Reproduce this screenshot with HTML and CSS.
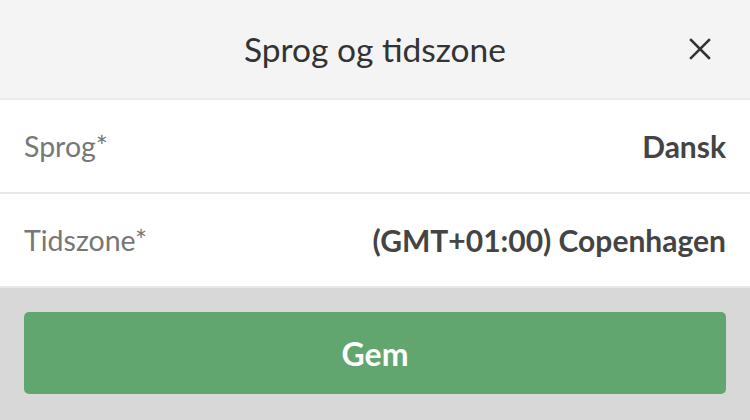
FILE: index.html
```html
<!DOCTYPE html>
<html lang="da">
<head>
<meta charset="utf-8">
<link rel="stylesheet" href="styles.css">
</head>
<body>
<div class="modal">
  <header class="head">
    <h1 class="title">Sprog og tidszone</h1>
    <button class="close" aria-label="Luk">
      <svg width="22" height="22" viewBox="0 0 22 22"><path d="M2 2 L20 20 M20 2 L2 20" stroke="#333" stroke-width="2.5" stroke-linecap="square" fill="none"/></svg>
    </button>
  </header>
  <div class="row">
    <span class="label">Sprog*</span>
    <span class="value">Dansk</span>
  </div>
  <div class="row">
    <span class="label">Tidszone*</span>
    <span class="value">(GMT+01:00) Copenhagen</span>
  </div>
  <footer class="foot">
    <button class="save">Gem</button>
  </footer>
</div>
</body>
</html>
```
FILE: styles.css
```css
html, body {
  margin: 0;
  padding: 0;
  height: 100%;
}
body {
  font-family: Lato, "Open Sans", sans-serif;
  background: #d8d8d8;
}
.modal {
  display: flex;
  flex-direction: column;
  height: 420px;
}
.head {
  height: 98px;
  background: #f4f4f4;
  border-bottom: 2px solid #ebebef;
  display: flex;
  align-items: center;
  justify-content: center;
  position: relative;
}
.title {
  margin: 0;
  font-weight: 400;
  font-size: 33.5px;
  color: #333;
}
.close {
  position: absolute;
  right: 39px;
  top: 38px;
  width: 22px;
  height: 22px;
  padding: 0;
  border: 0;
  background: none;
  display: flex;
}
.row {
  height: 92px;
  background: #fff;
  border-bottom: 2px solid #e8e8ea;
  display: flex;
  align-items: center;
  justify-content: space-between;
  padding: 0 24px;
}
.label {
  color: #777;
  font-size: 28.5px;
}
.value {
  color: #444;
  font-weight: 700;
  font-size: 30px;
}
.foot {
  flex: 1;
  background: #d8d8d8;
  padding: 24px 24px;
}
.save {
  width: 100%;
  height: 82px;
  border: 0;
  border-radius: 5px;
  background: #62a66f;
  color: #fff;
  font-family: Lato, sans-serif;
  font-weight: 700;
  font-size: 32px;
}
```
